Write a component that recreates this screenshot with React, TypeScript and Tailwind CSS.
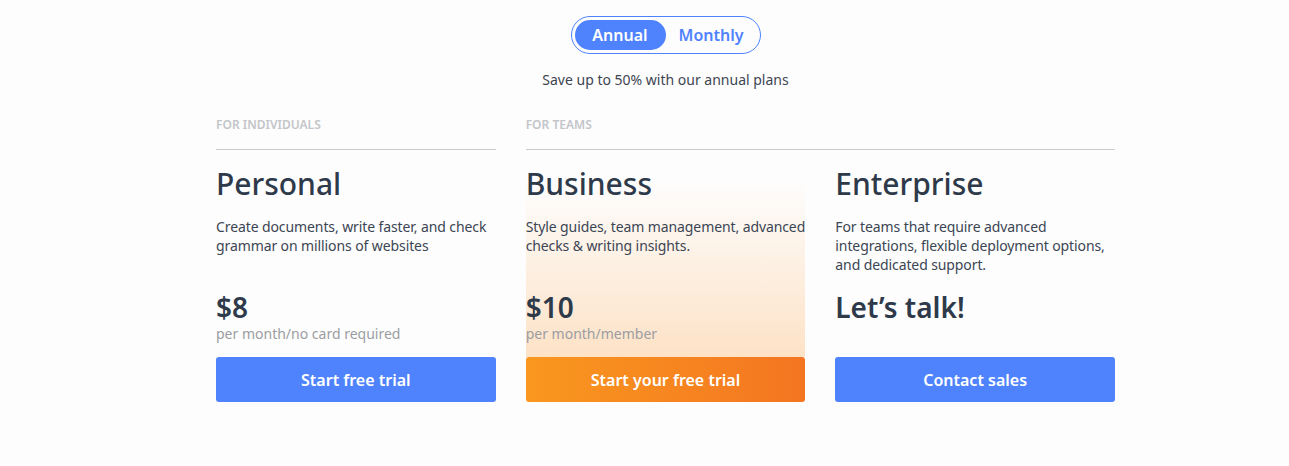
import React from "react";

export default function App() {
  const font = { fontFamily: '"Noto Sans", "Open Sans", sans-serif' };
  return (
    <div className="min-h-[466px] w-full bg-[#fdfdfd]" style={font}>
      <div className="ml-[216px] w-[899px] pt-[16px]">
        <div className="flex justify-center">
          <div className="flex rounded-full border border-[#4f83fd] p-[3px]">
            <button className="h-[30px] w-[91px] rounded-full bg-[#4f83fd] text-[16px] font-semibold text-white">
              Annual
            </button>
            <button className="h-[30px] w-[91px] rounded-full text-[16px] font-semibold text-[#4f83fd]">
              Monthly
            </button>
          </div>
        </div>
        <p className="mt-[16px] text-center text-[14px] leading-[20px] text-[#3e4552]">
          Save up to 50% with our annual plans
        </p>

        <div className="mt-[27px] grid grid-cols-3 gap-x-[30px]">
          <div>
            <div className="text-[12px] font-semibold uppercase leading-[16px] text-[#c3c5c9]">
              For individuals
            </div>
            <div className="mt-[16px] border-t border-[#c9cbcf]" />
          </div>
          <div className="col-span-2">
            <div className="text-[12px] font-semibold uppercase leading-[16px] text-[#c3c5c9]">
              For teams
            </div>
            <div className="mt-[16px] border-t border-[#c9cbcf]" />
          </div>

          {/* Personal */}
          <div className="flex flex-col">
            <div className="pt-[14px]">
              <h2 className="text-[30px] font-medium leading-[40px] text-[#2e3a4a]">Personal</h2>
              <p className="mt-[13px] h-[74px] text-[14px] leading-[19px] tracking-[-0.1px] text-[#3c4553]">
                Create documents, write faster, and check grammar on millions of websites
              </p>
              <div className="text-[28px] font-semibold leading-[33px] text-[#2e3a4a]">$8</div>
              <div className="text-[14px] leading-[20px] text-[#9b9da2]">per month/no card required</div>
            </div>
            <button className="mt-[13px] h-[45px] rounded-[3px] bg-[#4f83fd] text-[16px] font-semibold text-white">
              Start free trial
            </button>
          </div>

          {/* Business */}
          <div className="flex flex-col">
            <div className="bg-gradient-to-b from-[#fde3c8]/0 from-15% to-[#fde2c6] pt-[14px] pb-[13px]">
              <h2 className="text-[30px] font-medium leading-[40px] text-[#2e3a4a]">Business</h2>
              <p className="mt-[13px] h-[74px] text-[14px] leading-[19px] tracking-[-0.1px] text-[#3c4553]">
                Style guides, team management, advanced checks &amp; writing insights.
              </p>
              <div className="text-[28px] font-semibold leading-[33px] text-[#2e3a4a]">$10</div>
              <div className="text-[14px] leading-[20px] text-[#9b9da2]">per month/member</div>
            </div>
            <button className="h-[45px] rounded-[3px] bg-gradient-to-r from-[#f9971e] to-[#f47521] text-[16px] font-semibold text-white">
              Start your free trial
            </button>
          </div>

          {/* Enterprise */}
          <div className="flex flex-col">
            <div className="pt-[14px]">
              <h2 className="text-[30px] font-medium leading-[40px] text-[#2e3a4a]">Enterprise</h2>
              <p className="mt-[13px] h-[74px] text-[14px] leading-[19px] tracking-[-0.1px] text-[#3c4553]">
                For teams that require advanced integrations, flexible deployment options, and dedicated support.
              </p>
              <div className="text-[28px] font-semibold leading-[33px] text-[#2e3a4a]">Let’s talk!</div>
              <div className="h-[20px]" />
            </div>
            <button className="mt-[13px] h-[45px] rounded-[3px] bg-[#4f83fd] text-[16px] font-semibold text-white">
              Contact sales
            </button>
          </div>
        </div>
      </div>
    </div>
  );
}
